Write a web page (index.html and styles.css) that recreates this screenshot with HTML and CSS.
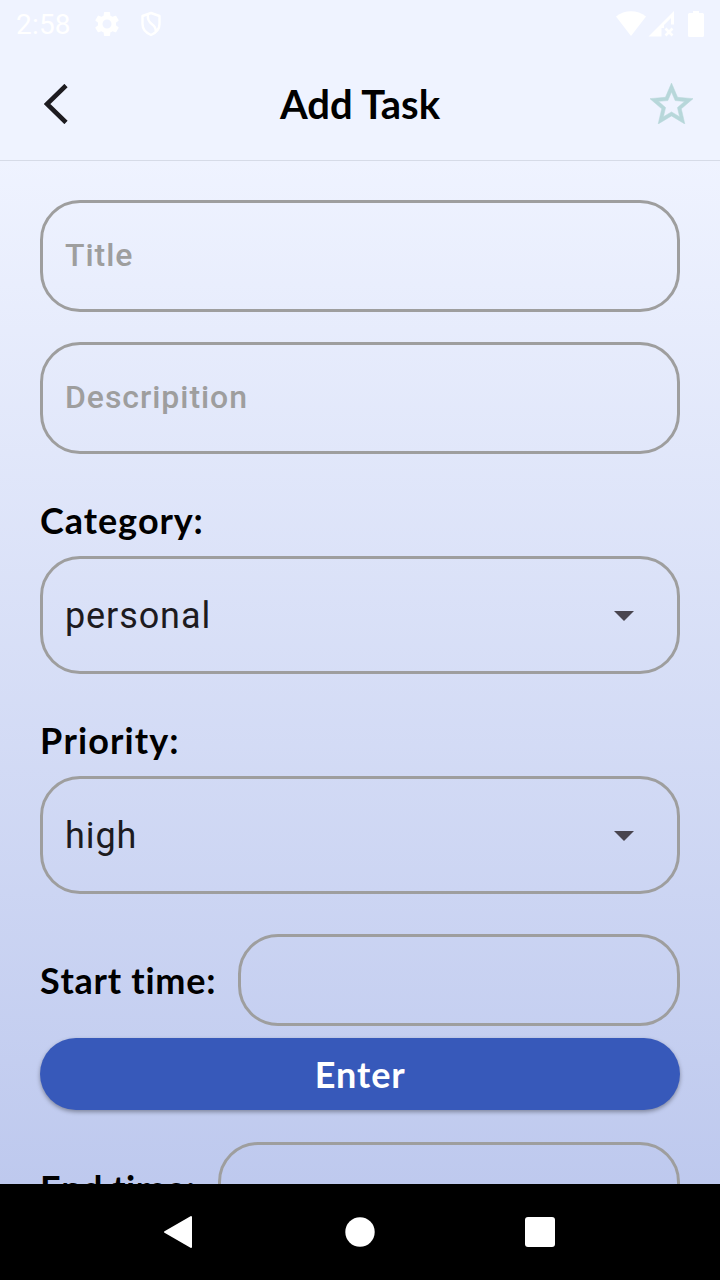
FILE: index.html
```html
<!DOCTYPE html>
<html lang="en">
<head>
<meta charset="utf-8">
<title>Add Task</title>
<link rel="stylesheet" href="styles.css">
</head>
<body>
<div class="screen">
  <div class="status-bar">
    <span class="clock">2:58</span>
    <svg class="icon-gear" viewBox="0 0 24 24" width="30" height="30"><path d="M19.14 12.94c.04-.3.06-.61.06-.94 0-.32-.02-.64-.07-.94l2.03-1.58c.18-.14.23-.41.12-.61l-1.92-3.32c-.12-.22-.37-.29-.59-.22l-2.39.96c-.5-.38-1.03-.7-1.62-.94l-.36-2.54c-.04-.24-.24-.41-.48-.41h-3.84c-.24 0-.43.17-.47.41l-.36 2.54c-.59.24-1.13.57-1.62.94l-2.39-.96c-.22-.08-.47 0-.59.22L2.74 8.87c-.12.21-.08.47.12.61l2.03 1.58c-.05.3-.09.63-.09.94s.02.64.07.94l-2.03 1.58c-.18.14-.23.41-.12.61l1.92 3.32c.12.22.37.29.59.22l2.39-.96c.5.38 1.03.7 1.62.94l.36 2.54c.05.24.24.41.48.41h3.84c.24 0 .44-.17.47-.41l.36-2.54c.59-.24 1.13-.56 1.62-.94l2.39.96c.22.08.47 0 .59-.22l1.92-3.32c.12-.22.07-.47-.12-.61l-2.01-1.58zM12 15.6A3.6 3.6 0 1 1 12 8.400a3.600 3.600 0 0 1 0 7.200z"/></svg>
    <svg class="icon-shield" viewBox="0 0 22 26" width="22" height="26"><path d="M11 2 19.500 5v8c0 5-3.500 8.800-8.500 11-5-2.200-8.500-6-8.500-11V5zM8 3.500c-.8 5 .8 7.500 4 9.700 2.800 2 4 3.800 3.800 7.300"/></svg>
    <svg class="icon-signals" viewBox="0 0 90 28" width="90" height="28">
      <path d="M1 6.500C9.500-.5 22.500-.5 31 6.500L16 26z"/>
      <path fill-rule="evenodd" d="M33.500 26.500 59 1v13.500h-3V8l-7 7v3H46.500V26.500z"/>
      <path class="signal-cross" d="m50.500 18.500 7 7m0-7-7 7"/>
      <path d="M78 1h6v2h3.500q1.500 0 1.500 1.500v21q0 1.500-1.500 1.500h-13q-1.500 0-1.500-1.500v-21Q73 3 74.500 3H78z"/>
    </svg>
  </div>
  <header class="app-bar">
    <svg class="icon-back" viewBox="0 0 24 40" width="24" height="40"><path d="M22 1.500 3 20 22 38.500"/></svg>
    <h1 class="title">Add Task</h1>
    <svg class="icon-star" viewBox="2 2 20 19" width="43" height="41"><path d="M22 9.240l-7.190-.62L12 2 9.190 8.630 2 9.240l5.460 4.730L5.820 21 12 17.270 18.180 21l-1.630-7.030L22 9.240zM12 15.400l-3.760 2.270 1-4.280-3.320-2.880 4.380-.38L12 6.100l1.710 4.040 4.380.38-3.320 2.880 1 4.280L12 15.400z"/></svg>
  </header>
  <main class="form">
    <div class="field text-field">Title</div>
    <div class="field text-field">Descripition</div>
    <div class="group">
      <div class="label category-label">Category:</div>
      <div class="field select-field"><span>personal</span><svg viewBox="0 0 20 10" width="20" height="10"><path d="M0 0h20L10 10z"/></svg></div>
    </div>
    <div class="group">
      <div class="label priority-label">Priority:</div>
      <div class="field select-field"><span>high</span><svg viewBox="0 0 20 10" width="20" height="10"><path d="M0 0h20L10 10z"/></svg></div>
    </div>
    <div class="time-row start-row">
      <div class="label start-label">Start time:</div>
      <div class="field time-field"></div>
    </div>
    <div class="enter">Enter</div>
    <div class="time-row end-row">
      <div class="label">End time:</div>
      <div class="field time-field"></div>
    </div>
  </main>
  <nav class="nav-bar">
    <svg viewBox="0 0 32 34" width="32" height="34"><path class="nav-back" d="M3 17 29 2v30z"/></svg>
    <svg viewBox="0 0 32 32" width="32" height="32"><circle cx="16" cy="16" r="14.700"/></svg>
    <svg viewBox="0 0 32 32" width="32" height="32"><rect x="1" y="1" width="30" height="30" rx="3"/></svg>
  </nav>
</div>
</body>
</html>
```
FILE: styles.css
```css
* { box-sizing: border-box; }
body { margin: 0; font-family: Lato, sans-serif; color: #000; }
svg { display: block; flex: none; }
.screen {
  width: 720px;
  height: 1280px;
  overflow: hidden;
  display: flex;
  flex-direction: column;
  background: linear-gradient(#eff3ff 160px, #bec9ee 1184px);
}
.status-bar {
  height: 48px;
  flex: none;
  display: flex;
  align-items: center;
  padding: 0 15px 0 16px;
  color: #fff;
  fill: #fff;
}
.clock { font: 400 28px/48px Roboto, sans-serif; letter-spacing: .2px; width: 76px; padding-top: 2px; }
.icon-shield { margin-left: 18px; fill: none; stroke: #fff; stroke-width: 2.4; stroke-linejoin: round; }
.icon-signals { margin-left: auto; }
.signal-cross { stroke: #fff; stroke-width: 2.6; fill: none; }
.app-bar {
  height: 113px;
  flex: none;
  display: grid;
  grid-template-columns: 1fr auto 1fr;
  align-items: center;
  padding: 0 27px 1px;
  border-bottom: 1px solid #d6dbe7;
}
.icon-back { fill: none; stroke: #1d1b20; stroke-width: 4.600; margin-left: 17px; }
.icon-star { fill: #b7d7da; stroke: #b7d7da; stroke-width: .25; justify-self: end; margin-bottom: 1px; }
.title { margin: 0; font-size: 40px; font-weight: 700; line-height: 48px; }
.form {
  flex: 1;
  min-height: 0;
  overflow: hidden;
  padding: 39px 40px 0;
}
.field { border: 3px solid #9e9e9e; border-radius: 40px; }
.text-field {
  height: 112px;
  margin-bottom: 30px;
  padding-left: 22px;
  font: 500 32px/104px Roboto, sans-serif;
  letter-spacing: .95px;
  color: #9e9e9e;
}
.label { font-size: 36px; font-weight: 700; line-height: 44px; letter-spacing: .5px; font-kerning: none; white-space: nowrap; }
.category-label { letter-spacing: .85px; }
.priority-label { letter-spacing: 1.1px; }
.start-label { letter-spacing: .73px; }
.group { padding-top: 14px; margin-bottom: 30px; }
.select-field {
  display: flex;
  align-items: center;
  justify-content: space-between;
  height: 118px;
  margin-top: 14px;
  padding: 2px 43px 0 22px;
  font: 400 36px/44px Roboto, sans-serif;
  letter-spacing: .9px;
  color: #1d1b20;
  fill: #49454f;
}
.time-row { display: flex; align-items: center; gap: 22px; }
.start-row { margin-top: 40px; }
.time-field { flex: 1; height: 92px; }
.enter {
  height: 72px;
  margin: 12px 0 32px;
  border-radius: 36px;
  background: #3759ba;
  box-shadow: 0 2px 4px rgba(0, 0, 0, .35);
  color: #fff;
  font-size: 36px;
  font-weight: 700;
  letter-spacing: .7px;
  font-kerning: none;
  line-height: 73px;
  text-align: center;
}
.nav-bar {
  height: 96px;
  flex: none;
  display: flex;
  align-items: center;
  justify-content: space-between;
  padding: 0 164px 0 162px;
  background: #000;
  fill: #fff;
}
.nav-bar circle { transform: translateX(1px); }
.nav-back { stroke: #fff; stroke-width: 2; stroke-linejoin: round; }
```
